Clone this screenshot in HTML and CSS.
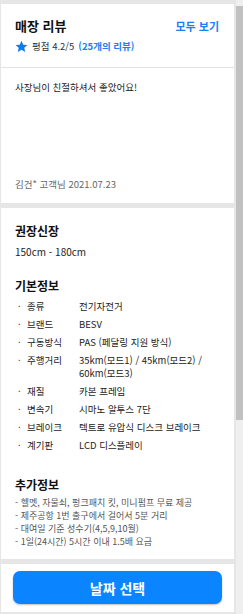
FILE: index.html
```html
<!DOCTYPE html>
<html lang="ko">
<head>
    <meta charset="UTF-8">
    <meta name="viewport" content="width=device-width, initial-scale=1.0">
    <title>매장 리뷰</title>
    <link rel="stylesheet" href="styles.css">
</head>
<body>
    <div class="layout">
        <main class="page">
            <!-- 리뷰 헤더 -->
            <section class="card review-head">
                <div class="head-row">
                    <h1>매장 리뷰</h1>
                    <a class="more" href="#">모두 보기</a>
                </div>
                <div class="rating">
                    <svg class="star" viewBox="0 0 24 24" width="13" height="13">
                        <path d="M12 1.5l3.2 7.1 7.7.7-5.8 5.1 1.7 7.6L12 18l-6.8 4 1.7-7.6L1.1 9.3l7.7-.7z" fill="#0a7cf0"/>
                    </svg>
                    <span>평점 4.2/5</span>
                    <b>(25개의 리뷰)</b>
                </div>
            </section>

            <!-- 리뷰 본문 -->
            <section class="card review-body">
                <p class="review-text">사장님이 친절하셔서 좋았어요!</p>
                <p class="review-meta">김건* 고객님 2021.07.23</p>
            </section>

            <!-- 상품 정보 -->
            <section class="card info">
                <h2>권장신장</h2>
                <p class="height">150cm - 180cm</p>

                <h2 class="gap">기본정보</h2>
                <ul class="spec">
                    <li><span class="label">종류</span><span class="value">전기자전거</span></li>
                    <li><span class="label">브랜드</span><span class="value">BESV</span></li>
                    <li><span class="label">구동방식</span><span class="value">PAS (페달링 지원 방식)</span></li>
                    <li><span class="label">주행거리</span><span class="value">35km(모드1) / 45km(모드2) / 60km(모드3)</span></li>
                    <li><span class="label">재질</span><span class="value">카본 프레임</span></li>
                    <li><span class="label">변속기</span><span class="value">시마노 알투스 7단</span></li>
                    <li><span class="label">브레이크</span><span class="value">텍트로 유압식 디스크 브레이크</span></li>
                    <li><span class="label">계기판</span><span class="value">LCD 디스플레이</span></li>
                </ul>

                <h2 class="gap-lg">추가정보</h2>
                <ul class="extra">
                    <li>- 헬멧, 자물쇠, 펑크패치 킷, 미니펌프 무료 제공</li>
                    <li>- 제주공항 1번 출구에서 걸어서 5분 거리</li>
                    <li>- 대여일 기준 성수기(4,5,9,10월)</li>
                    <li>- 1일(24시간) 5시간 이내 1.5배 요금</li>
                </ul>
            </section>

            <!-- 하단 버튼 -->
            <section class="card bottom">
                <button class="date-btn">날짜 선택</button>
            </section>
        </main>

        <!-- 스크롤바 모양 -->
        <div class="scrollbar"><div class="thumb"></div></div>
    </div>
</body>
</html>
```

FILE: styles.css
```css
html, body {
    margin: 0;
    height: 100%;
    overflow: hidden;
}
body {
    background-color: #e6e6e6;
    font-family: "Noto Sans CJK KR", "Noto Sans", sans-serif;
    color: #222;
}
.layout {
    display: flex;
    height: 614px;
}
.page {
    width: 233px;
    margin-left: 1px;
    padding-top: 4px;
}
.card {
    background: #fff;
    padding: 0 14px;
}
/* 리뷰 헤더 */
.review-head {
    height: 63px;
    border-bottom: 1px solid #e4e4e4;
}
.head-row {
    display: flex;
    justify-content: space-between;
    align-items: center;
    padding-top: 13px;
}
h1 {
    margin: 0;
    font-size: 13px;
    font-weight: bold;
    line-height: 18px;
    color: #111;
}
.more {
    font-size: 11px;
    font-weight: bold;
    color: #1a7ff0;
    text-decoration: none;
    margin-right: 1px;
}
.rating {
    display: flex;
    align-items: center;
    gap: 3px;
    margin-top: 4px;
    font-size: 9.5px;
    line-height: 14px;
    color: #333;
}
.rating .star {
    margin-right: 1px;
}
.rating b {
    color: #1a7ff0;
    margin-left: 1px;
}
/* 리뷰 본문 */
.review-body {
    height: 135px;
    display: flex;
    flex-direction: column;
    justify-content: space-between;
    padding-top: 12px;
    padding-bottom: 12px;
    box-sizing: border-box;
}
.review-text {
    margin: 0;
    font-size: 9.5px;
    line-height: 14px;
    color: #222;
}
.review-meta {
    margin: 0;
    font-size: 9.5px;
    line-height: 14px;
    color: #666;
}
/* 상품 정보 */
.info {
    margin-top: 5px;
    padding-top: 15px;
    padding-bottom: 12px;
    height: 351px;
    box-sizing: border-box;
}
h2 {
    margin: 0;
    font-size: 12px;
    font-weight: bold;
    line-height: 16px;
    color: #111;
}
h2.gap {
    margin-top: 19px;
}
h2.gap-lg {
    margin-top: 25px;
}
.height {
    margin: 6px 0 0;
    font-size: 10px;
    line-height: 14px;
}
.spec {
    list-style: none;
    margin: 6px 0 0;
    padding: 0;
    font-size: 9.5px;
    color: #222;
}
.spec li {
    display: flex;
    line-height: 13px;
    margin-bottom: 5px;
}
.spec .label {
    width: 64px;
    flex-shrink: 0;
    padding-left: 12px;
    position: relative;
    box-sizing: border-box;
}
.spec .label::before {
    content: "·";
    position: absolute;
    left: 3px;
}
.spec .value {
    flex: 1;
}
.extra {
    list-style: none;
    margin: 3px 0 0;
    padding: 0;
    font-size: 9px;
    line-height: 13px;
    color: #555;
}
/* 하단 버튼 */
.bottom {
    margin-top: 5px;
    padding: 7px 12px 8px 12px;
}
.date-btn {
    display: block;
    width: 209px;
    height: 33px;
    border: none;
    border-radius: 7px;
    background: #0a84ff;
    color: #fff;
    font-family: inherit;
    font-size: 14px;
    font-weight: bold;
    box-shadow: 0 1px 2px rgba(0, 0, 0, 0.25);
    cursor: pointer;
}
/* 스크롤바 */
.scrollbar {
    width: 7px;
    margin-left: 2px;
    background: #efefef;
    padding-top: 6px;
}
.thumb {
    height: 414px;
    background: #c1c1c1;
}
```
